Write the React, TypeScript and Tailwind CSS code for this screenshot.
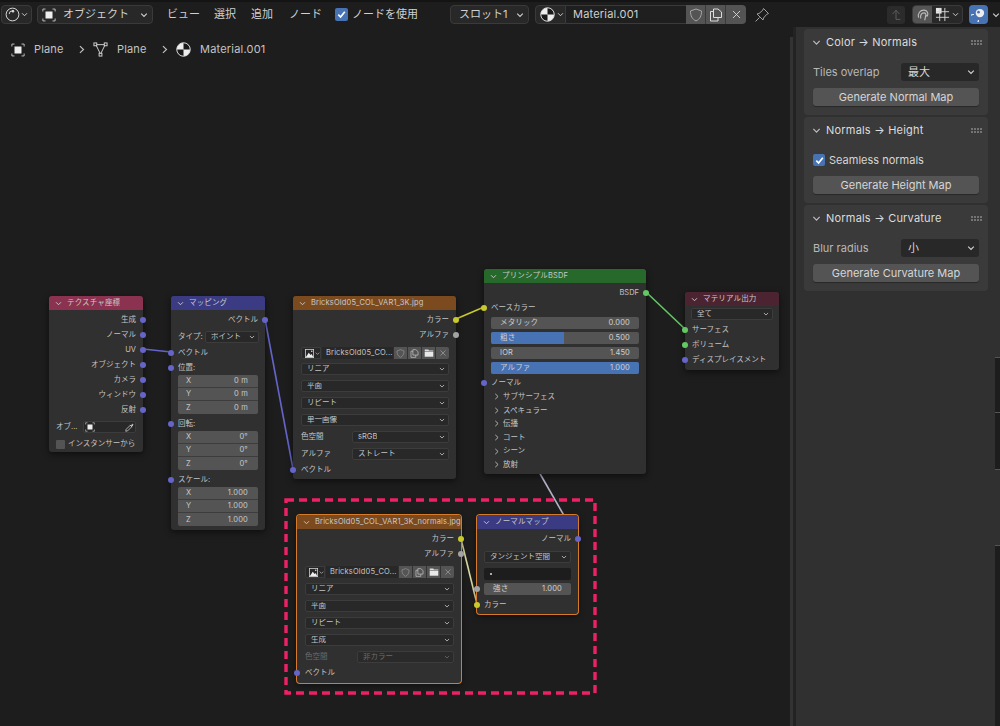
import React from "react";

const FONT = "[font-family:Inter,'Noto_Sans_CJK_JP',sans-serif]";

const Chev = ({ className = "" }: { className?: string }) => (
  <svg viewBox="0 0 8 8" className={"shrink-0 " + className} fill="none" stroke="currentColor" strokeWidth="1.1">
    <path d="M1.2 2.6 4 5.4 6.8 2.6" />
  </svg>
);
const ChevR = ({ className = "" }: { className?: string }) => (
  <svg viewBox="0 0 8 8" className={"shrink-0 " + className} fill="none" stroke="currentColor" strokeWidth="1">
    <path d="M2.6 1 5.8 4 2.6 7" />
  </svg>
);
const ObjIcon = ({ className = "" }: { className?: string }) => (
  <svg viewBox="0 0 16 16" className={"shrink-0 " + className} fill="none" stroke="#cfcfcf" strokeWidth="1">
    <rect x="4" y="4" width="8" height="8" fill="#eee" stroke="none" />
    <path d="M1 4V1.2H4M12 1.2H15V4M15 12V14.8H12M4 14.8H1V12" />
  </svg>
);
const MeshIcon = ({ className = "" }: { className?: string }) => (
  <svg viewBox="0 0 16 16" className={"shrink-0 " + className} fill="none" stroke="#d8d8d8" strokeWidth="1">
    <path d="M3 2.8H13L8 13Z" />
    <rect x="1" y="1" width="3" height="3" fill="#1d1d1d" />
    <rect x="12" y="1" width="3" height="3" fill="#1d1d1d" />
    <rect x="6.5" y="12" width="3" height="3" fill="#1d1d1d" />
  </svg>
);
const MatIcon = ({ className = "" }: { className?: string }) => (
  <svg viewBox="0 0 16 16" className={"shrink-0 " + className}>
    <circle cx="8" cy="8" r="7.2" fill="#eee" />
    <path d="M8 .8A7.2 7.2 0 0 1 15.2 8H8Z" fill="#1a1a1a" />
    <path d="M8 8H.8A7.2 7.2 0 0 0 8 15.2Z" fill="#1a1a1a" />
    <circle cx="8" cy="8" r="7.2" fill="none" stroke="#ddd" strokeWidth="1" />
  </svg>
);
const ImgIcon = ({ className = "" }: { className?: string }) => (
  <svg viewBox="0 0 12 12" className={"shrink-0 " + className}>
    <rect x=".5" y=".5" width="11" height="11" fill="none" stroke="#d8d8d8" />
    <path d="M1 11 5 5l2.5 3L9 6.5 11 11Z" fill="#eee" />
    <circle cx="9" cy="3" r="1" fill="#eee" />
  </svg>
);
const Shield = ({ className = "" }: { className?: string }) => (
  <svg viewBox="0 0 14 14" className={"shrink-0 " + className} fill="none" stroke="currentColor" strokeWidth="1">
    <path d="M7 1 12.5 3C12.5 8 11 11 7 13 3 11 1.5 8 1.5 3Z" />
  </svg>
);
const Copy = ({ className = "" }: { className?: string }) => (
  <svg viewBox="0 0 14 14" className={"shrink-0 " + className} fill="none" stroke="currentColor" strokeWidth="1">
    <path d="M4.5 3.5H1.5V13H9V9.5" />
    <path d="M4.5 1H9L12.5 4V9.5H4.5Z" />
  </svg>
);
const Folder = ({ className = "" }: { className?: string }) => (
  <svg viewBox="0 0 14 14" className={"shrink-0 " + className}>
    <path d="M1 2H6L7 3.5H13V5H1Z" fill="#ddd" />
    <rect x="1" y="5.6" width="12" height="6.6" fill="#e8e8e8" />
  </svg>
);
const Cross = ({ className = "" }: { className?: string }) => (
  <svg viewBox="0 0 14 14" className={"shrink-0 " + className} fill="none" stroke="currentColor" strokeWidth="1.1">
    <path d="M2.5 2.5 11.5 11.5M11.5 2.5 2.5 11.5" />
  </svg>
);
const Dropper = ({ className = "" }: { className?: string }) => (
  <svg viewBox="0 0 12 12" className={"shrink-0 " + className} fill="none" stroke="#d8d8d8" strokeWidth="1">
    <path d="M7 3 1.5 8.5 1 11l2.5-.5L9 5" />
    <path d="M6.5 2.5 9.5 5.5M8 3.5 10 1.5 10.8 2.2 9 4.5" fill="#d8d8d8" />
  </svg>
);
const Check = ({ className = "" }: { className?: string }) => (
  <svg viewBox="0 0 12 12" className={className} fill="none" stroke="#fff" strokeWidth="1.8">
    <path d="M2.5 6.2 5 8.8 9.6 3" />
  </svg>
);

const Sock = ({ side, color }: { side: "l" | "r"; color: string }) => (
  <span
    className={
      "absolute top-1/2 -translate-y-1/2 w-[6px] h-[6px] rounded-full " +
      (side === "l" ? "-left-[3px] " : "-right-[3px] ") +
      color
    }
  />
);
const PUR = "bg-[#6565c9]";
const YEL = "bg-[#c9c92e]";
const GRY = "bg-[#a3a3a3]";
const GRN = "bg-[#63c763]";

const Out = ({ t, c }: { t: string; c: string }) => (
  <div className="relative h-[15px] flex items-center justify-end pr-[7px]">
    {t}
    <Sock side="r" color={c} />
  </div>
);
const In = ({ t, c, className = "" }: { t: string; c: string; className?: string }) => (
  <div className={"relative h-[15px] flex items-center pl-[7px] " + className}>
    {t}
    <Sock side="l" color={c} />
  </div>
);
const Dd = ({ t, className = "", dim = false }: { t: string; className?: string; dim?: boolean }) => (
  <div
    className={
      "h-[12px] rounded-[2px] border border-[#3c3c3c] flex items-center justify-between pl-[5px] pr-[3px] " +
      (dim ? "bg-[#2a2a2a] text-[#6a6a6a] " : "bg-[#282828] ") +
      className
    }
  >
    <span className="truncate">{t}</span>
    <Chev className="w-[6px] h-[6px]" />
  </div>
);
const Head = ({ t, color, className = "" }: { t: string; color: string; className?: string }) => (
  <div className={"h-[14px] flex items-center pl-[6px] gap-[5px] rounded-t-[3px] text-[#c8c8c8] tracking-[0.15px] " + color + " " + className}>
    <Chev className="w-[7px] h-[7px]" />
    <span className="whitespace-nowrap">{t}</span>
  </div>
);
const NUM = "h-[13px] flex items-center justify-between pl-[8px] pr-[10px] text-[#c8c8c8] tracking-[0.2px] border-b border-[#3d3d3d] last:border-b-0";
const Xyz = ({ v }: { v: string[] }) => (
  <div className="mx-[7px] rounded-[2px] bg-[#545454] overflow-hidden">
    {["X", "Y", "Z"].map((a, i) => (
      <div key={a} className={NUM}>
        <span>{a}</span>
        <span>{v[i]}</span>
      </div>
    ))}
  </div>
);
const Slider = ({ t, v, fill = "" }: { t: string; v: string; fill?: string }) => (
  <div className="relative mx-[7px] h-[12px] rounded-[2px] bg-[#545454] overflow-hidden flex items-center justify-between pl-[9px] pr-[9px] text-[#d0d0d0] tracking-[0.15px]">
    {fill && <span className={"absolute left-0 top-0 h-full bg-[#4772b3] " + fill} />}
    <span className="relative">{t}</span>
    <span className="relative">{v}</span>
  </div>
);
const ImgRow = ({ name }: { name: string }) => (
  <div className="flex h-[12px] items-stretch mt-[5px]">
    <div className="w-[20px] bg-[#282828] rounded-l-[2px] flex items-center pl-[3px] gap-[1px] border border-[#3c3c3c]">
      <ImgIcon className="w-[9px] h-[9px]" />
      <Chev className="w-[5px] h-[5px]" />
    </div>
    <div className="flex-1 min-w-0 ml-[1px] bg-[#282828] flex items-center pl-[4px] overflow-hidden whitespace-nowrap tracking-[0.15px]">{name}</div>
    <div className="flex ml-[1px] bg-[#545454] rounded-r-[2px] text-[#d0d0d0]">
      <div className="w-[14px] flex items-center justify-center border-r border-[#333]"><Shield className="w-[9px] h-[9px] text-[#9a9a9a]" /></div>
      <div className="w-[14px] flex items-center justify-center border-r border-[#333]"><Copy className="w-[9px] h-[9px]" /></div>
      <div className="w-[14px] flex items-center justify-center border-r border-[#333]"><Folder className="w-[10px] h-[10px]" /></div>
      <div className="w-[13px] flex items-center justify-center"><Cross className="w-[8px] h-[8px] text-[#aaa]" /></div>
    </div>
  </div>
);
const Labeled = ({ l, t, w, dim = false, className = "" }: { l: string; t: string; w: string; dim?: boolean; className?: string }) => (
  <div className={"flex items-center " + className}>
    <span className={"shrink-0 " + w + (dim ? " text-[#6a6a6a]" : "")}>{l}</span>
    <Dd t={t} className="flex-1 min-w-0" dim={dim} />
  </div>
);

const NODE = "absolute bg-[#303030] rounded-[3px] shadow-[0_2px_6px_rgba(0,0,0,0.55)] text-[7.5px] leading-none text-[#c4c4c4] ";

const Panel = ({ title, children, cls }: { title: string; children: React.ReactNode; cls: string }) => (
  <div className={"bg-[#3a3a3a] rounded-[4px] px-[9px] " + cls}>
    <div className="h-[26px] flex items-center text-[#dcdcdc] tracking-[0.2px]">
      <Chev className="w-[9px] h-[9px] mr-[5px] -ml-[1px] text-[#bbb]" />
      <span>{title}</span>
      <span className="ml-auto mr-[-3px] grid grid-cols-4 gap-[1px]">
        {Array.from({ length: 8 }).map((_, i) => (
          <span key={i} className="w-[2px] h-[2px] bg-[#747474]" />
        ))}
      </span>
    </div>
    {children}
  </div>
);
const Btn = ({ t }: { t: string }) => (
  <div className="h-[18px] rounded-[3px] bg-[#545454] flex items-center justify-center text-[#d6d6d6] shadow-[0_1px_1px_rgba(0,0,0,0.3)]">{t}</div>
);
const PanelDd = ({ l, t }: { l: string; t: string }) => (
  <div className="flex items-center h-[18px] mt-[8px] mb-[7px] text-[#b8b8b8]">
    <span className="w-[88px]">{l}</span>
    <div className="flex-1 h-[18px] bg-[#282828] rounded-[3px] flex items-center justify-between pl-[7px] pr-[4px] text-[#d6d6d6]">
      <span>{t}</span>
      <Chev className="w-[8px] h-[8px]" />
    </div>
  </div>
);

const Wires = () => (
  <svg className="absolute inset-0 w-[790px] h-[699px]" viewBox="0 27 790 699" fill="none">
    <path d="M143 349 171 352" stroke="#6565c9" strokeWidth="1.6" />
    <path d="M265 319 293 469" stroke="#6565c9" strokeWidth="1.6" />
    <path d="M456 319 484 307" stroke="#c9c92e" strokeWidth="1.6" />
    <path d="M646 292 685 329" stroke="#63c763" strokeWidth="1.6" />
    <path d="M535 465 570 526" stroke="#b4b0c6" strokeWidth="1.6" />
    <path d="M461 539 477 604" stroke="#d9d9a0" strokeWidth="1.6" />
    <rect x="286" y="500" width="309" height="193" stroke="#ee2166" strokeWidth="3.4" strokeDasharray="8 5" />
  </svg>
);

export default function App() {
  return (
    <div className={"w-[1000px] h-[726px] bg-[#1d1d1d] overflow-hidden flex flex-col text-[11px] leading-none text-[#d0d0d0] " + FONT}>
      {/* top bar */}
      <div className="h-[27px] shrink-0 border-t-[2px] border-[#141414] flex items-center pl-[1px] whitespace-nowrap [&>*]:shrink-0">
        <div className="w-[31px] h-[19px] rounded-[4px] bg-[#282828] border border-[#3a3a3a] flex items-center pl-[3px] gap-[1px]">
          <svg viewBox="0 0 16 16" className="w-[15px] h-[15px]" fill="none" stroke="#e0e0e0" strokeWidth="1">
            <circle cx="8" cy="8" r="6.8" />
            <path d="M4.5 7.5A3.5 3.5 0 0 1 8 4" />
            <circle cx="8.5" cy="4.5" r="1" fill="#e0e0e0" />
          </svg>
          <Chev className="w-[7px] h-[7px]" />
        </div>
        <div className="ml-[5px] w-[116px] h-[19px] rounded-[4px] bg-[#282828] border border-[#3a3a3a] flex items-center pl-[4px] pr-[4px]">
          <ObjIcon className="w-[14px] h-[14px]" />
          <span className="ml-[7px]">オブジェクト</span>
          <Chev className="w-[8px] h-[8px] ml-auto" />
        </div>
        <span className="ml-[14px]">ビュー</span>
        <span className="ml-[14px]">選択</span>
        <span className="ml-[15px]">追加</span>
        <span className="ml-[16px]">ノード</span>
        <span className="ml-[13px] w-[13px] h-[13px] rounded-[2px] bg-[#4772b3] flex items-center justify-center">
          <Check className="w-[11px] h-[11px]" />
        </span>
        <span className="ml-[4px]">ノードを使用</span>
        <div className="ml-[32px] w-[79px] h-[19px] rounded-[4px] bg-[#282828] border border-[#3a3a3a] flex items-center pl-[8px] pr-[4px]">
          <span>スロット1</span>
          <Chev className="w-[8px] h-[8px] ml-auto" />
        </div>
        <div className="ml-[6px] flex h-[19px]">
          <div className="w-[31px] bg-[#282828] border border-[#3a3a3a] rounded-l-[4px] flex items-center pl-[4px] gap-[2px]">
            <MatIcon className="w-[15px] h-[15px]" />
            <Chev className="w-[7px] h-[7px]" />
          </div>
          <div className="w-[120px] bg-[#1f1f1f] border-y border-[#3a3a3a] flex items-center pl-[7px] tracking-[0.2px]">Material.001</div>
          <div className="flex bg-[#545454] rounded-r-[4px] text-[#ddd]">
            <div className="w-[20px] flex items-center justify-center border-r border-[#3a3a3a]"><Shield className="w-[14px] h-[14px] text-[#a8a8a8]" /></div>
            <div className="w-[20px] flex items-center justify-center border-r border-[#3a3a3a]"><Copy className="w-[14px] h-[14px]" /></div>
            <div className="w-[20px] flex items-center justify-center"><Cross className="w-[11px] h-[11px]" /></div>
          </div>
        </div>
        <svg viewBox="0 0 16 16" className="ml-[8px] w-[16px] h-[16px]" fill="none" stroke="#a0a0a0" strokeWidth="1">
          <path d="M9.5 1.5 14.5 6.5 12.5 7.5 9.5 11 9 13 3 7 5 6.5 8.5 3.5ZM5.5 10.5 1.5 14.5" />
        </svg>
        <div className="ml-[117px] w-[18px] h-[18px] rounded-[3px] bg-[#2b2b2b] flex items-center justify-center">
          <svg viewBox="0 0 16 16" className="w-[14px] h-[14px]" fill="none" stroke="#5e5e5e" strokeWidth="1.1">
            <path d="M4 7 8 2.5 12 7M8 2.5V13H13" />
          </svg>
        </div>
        <div className="ml-[7px] flex h-[19px] w-[51px] rounded-[4px] bg-[#282828] border border-[#3a3a3a] overflow-hidden items-center">
          <div className="w-[19px] h-full bg-[#545454] flex items-center justify-center">
            <svg viewBox="0 0 16 16" className="w-[14px] h-[14px]" fill="none" stroke="#bdbdbd" strokeWidth="1.3">
              <path d="M3 11C1.5 6 5 2.5 9 2.5 13 2.5 14.5 6.5 13 9M5.5 12C4.5 8 6.5 5.5 9 5.5 11 5.5 11.8 7.5 11 9M10 14 11 9 13.5 9" />
            </svg>
          </div>
          <svg viewBox="0 0 16 16" className="ml-[3px] w-[15px] h-[15px]" fill="none" stroke="#d4d4d4" strokeWidth="1">
            <rect x="1" y="1" width="6" height="6" fill="#e8e8e8" stroke="none" />
            <path d="M10.5 1V15M5 1V15M1 5H15M1 11H15" />
          </svg>
          <Chev className="ml-[2px] w-[7px] h-[7px]" />
        </div>
        <div className="ml-[6px] w-[19px] h-[19px] rounded-[4px] bg-[#4772b3] flex items-center justify-center">
          <svg viewBox="0 0 16 16" className="w-[15px] h-[15px]">
            <path d="M3 8A5.5 5.5 0 1 0 8 14" fill="none" stroke="#fff" strokeWidth="1.2" />
            <circle cx="9.5" cy="6.5" r="4.5" fill="#eee" />
            <circle cx="8" cy="5.5" r="1.4" fill="#4772b3" />
          </svg>
        </div>
        <Chev className="ml-[4px] w-[8px] h-[8px]" />
      </div>

      <div className="flex-1 min-h-0 flex">
        {/* node canvas */}
        <div className="relative w-[790px] shrink-0">
          <Wires />

          <div className="absolute left-[11px] top-[15px] flex items-center text-[#c4c4c4] tracking-[0.15px]">
            <ObjIcon className="w-[14px] h-[14px]" />
            <span className="ml-[9px] w-[28px]">Plane</span>
            <ChevR className="ml-[15px] w-[9px] h-[9px]" />
            <MeshIcon className="ml-[7px] w-[15px] h-[15px]" />
            <span className="ml-[9px] w-[28px]">Plane</span>
            <ChevR className="ml-[15px] w-[9px] h-[9px]" />
            <MatIcon className="ml-[7px] w-[15px] h-[15px]" />
            <span className="ml-[9px] tracking-[0.2px]">Material.001</span>
          </div>

          {/* Texture Coordinate */}
          <div className={NODE + "left-[49px] top-[269px] w-[94px] h-[156px]"}>
            <Head t="テクスチャ座標" color="bg-[#8b3250]" />
            <div className="pt-[2px]">
              <Out t="生成" c={PUR} />
              <Out t="ノーマル" c={PUR} />
              <Out t="UV" c={PUR} />
              <Out t="オブジェクト" c={PUR} />
              <Out t="カメラ" c={PUR} />
              <Out t="ウィンドウ" c={PUR} />
              <Out t="反射" c={PUR} />
              <div className="flex items-center mt-[4px] h-[12px] pl-[7px] pr-[7px]">
                <span className="w-[27px]">オブ...</span>
                <div className="flex-1 h-[12px] bg-[#282828] border border-[#3c3c3c] rounded-[2px] flex items-center justify-between px-[1px]">
                  <ObjIcon className="w-[10px] h-[10px]" />
                  <Dropper className="w-[9px] h-[9px]" />
                </div>
              </div>
              <div className="flex items-center mt-[5px] h-[12px] pl-[7px] gap-[3px]">
                <span className="w-[9px] h-[9px] rounded-[1px] bg-[#545454]" />
                <span>インスタンサーから</span>
              </div>
            </div>
          </div>

          {/* Mapping */}
          <div className={NODE + "left-[171px] top-[269px] w-[94px] h-[234px]"}>
            <Head t="マッピング" color="bg-[#3b3b83]" />
            <div className="pt-[2px]">
              <Out t="ベクトル" c={PUR} />
              <div className="flex items-center mt-[4px] h-[12px] pl-[7px] pr-[6px]">
                <span className="w-[27px]">タイプ:</span>
                <Dd t="ポイント" className="flex-1 min-w-0" />
              </div>
              <In t="ベクトル" c={PUR} className="mt-[2px]" />
              <In t="位置:" c={PUR} />
              <Xyz v={["0 m", "0 m", "0 m"]} />
              <In t="回転:" c={PUR} className="mt-[2px]" />
              <Xyz v={["0°", "0°", "0°"]} />
              <In t="スケール:" c={PUR} className="mt-[2px]" />
              <Xyz v={["1.000", "1.000", "1.000"]} />
            </div>
          </div>

          {/* Image texture */}
          <div className={NODE + "left-[293px] top-[269px] w-[163px] h-[183px]"}>
            <Head t="BricksOld05_COL_VAR1_3K.jpg" color="bg-[#7b4a1f]" />
            <div className="pt-[2px]">
              <Out t="カラー" c={YEL} />
              <Out t="アルファ" c={GRY} />
              <div className="pl-[8px] pr-[7px]">
                <ImgRow name="BricksOld05_CO..." />
                <Dd t="リニア" className="mt-[4px]" />
                <Dd t="平面" className="mt-[5px]" />
                <Dd t="リピート" className="mt-[5px]" />
                <Dd t="単一画像" className="mt-[5px]" />
                <Labeled l="色空間" t="sRGB" w="w-[51px]" className="mt-[5px]" />
                <Labeled l="アルファ" t="ストレート" w="w-[51px]" className="mt-[5px]" />
              </div>
              <In t="ベクトル" c={PUR} className="mt-[2px] pl-[8px]" />
            </div>
          </div>

          {/* Principled */}
          <div className={NODE + "left-[484px] top-[242px] w-[162px] h-[205px]"}>
            <Head t="プリンシプルBSDF" color="bg-[#27692b]" className="h-[13px]" />
            <div className="pt-[2px]">
              <Out t="BSDF" c={GRN} />
              <In t="ベースカラー" c={YEL} />
              <div className="flex flex-col gap-[3px] mt-[2px]">
                <Slider t="メタリック" v="0.000" />
                <Slider t="粗さ" v="0.500" fill="w-[49.5%]" />
                <Slider t="IOR" v="1.450" />
                <Slider t="アルファ" v="1.000" fill="w-full" />
              </div>
              <In t="ノーマル" c={PUR} className="mt-[1px]" />
              {["サブサーフェス", "スペキュラー", "伝播", "コート", "シーン", "放射"].map((t) => (
                <div key={t} className="h-[13.6px] flex items-center pl-[9px] gap-[3px]">
                  <ChevR className="w-[7px] h-[7px]" />
                  <span>{t}</span>
                </div>
              ))}
            </div>
          </div>

          {/* Material output */}
          <div className={NODE + "left-[685px] top-[265px] w-[94px] h-[78px]"}>
            <Head t="マテリアル出力" color="bg-[#4c2431]" />
            <Dd t="全て" className="mx-[6px] mt-[2px]" />
            <div className="mt-[2px]">
              <In t="サーフェス" c={GRN} />
              <In t="ボリューム" c={GRN} />
              <In t="ディスプレイスメント" c={PUR} />
            </div>
          </div>

          {/* Normals image */}
          <div className={NODE + "left-[297px] top-[488px] w-[164px] h-[168px] ring-1 ring-[#d67a2c]"}>
            <Head t="BricksOld05_COL_VAR1_3K_normals.jpg" color="bg-[#7b4a1f]" />
            <div className="pt-[2px]">
              <Out t="カラー" c={YEL} />
              <Out t="アルファ" c={GRY} />
              <div className="pl-[8px] pr-[7px]">
                <ImgRow name="BricksOld05_CO..." />
                <Dd t="リニア" className="mt-[5px]" />
                <Dd t="平面" className="mt-[5px]" />
                <Dd t="リピート" className="mt-[5px]" />
                <Dd t="生成" className="mt-[5px]" />
                <Labeled l="色空間" t="非カラー" w="w-[52px]" dim className="mt-[5px]" />
              </div>
              <In t="ベクトル" c={PUR} className="mt-[2px] pl-[8px]" />
            </div>
          </div>

          {/* Normal map */}
          <div className={NODE + "left-[477px] top-[488px] w-[101px] h-[99px] ring-1 ring-[#d67a2c]"}>
            <Head t="ノーマルマップ" color="bg-[#3b3b83]" />
            <div className="pt-[2px]">
              <Out t="ノーマル" c={PUR} />
              <div className="px-[7px]">
                <Dd t="タンジェント空間" className="mt-[5px]" />
                <div className="mt-[5px] h-[12px] bg-[#1d1d1d] rounded-[2px] flex items-center pl-[6px]">
                  <span className="w-[2px] h-[2px] rounded-full bg-[#ddd]" />
                </div>
              </div>
              <div className="relative mt-[3px] h-[12px]">
                <Sock side="l" color={GRY} />
                <div className="mx-[7px] h-[12px] rounded-[2px] bg-[#545454] flex items-center justify-between pl-[9px] pr-[9px] text-[#d0d0d0] tracking-[0.15px]">
                  <span>強さ</span>
                  <span>1.000</span>
                </div>
              </div>
              <In t="カラー" c={YEL} className="mt-[2px]" />
            </div>
          </div>
        </div>

        {/* sidebar edges */}
        <div className="w-[3px] mt-[10px] bg-[#333333] shrink-0" />
        <div className="w-[3px] bg-[#232323] shrink-0" />
        <div className="w-[199px] shrink-0 bg-[#303030] pl-[8px] pr-[7px] pt-[2px] flex flex-col gap-[2px]">
          <Panel title="Color → Normals" cls="h-[86px]">
            <PanelDd l="Tiles overlap" t="最大" />
            <Btn t="Generate Normal Map" />
          </Panel>
          <Panel title="Normals → Height" cls="h-[86px]">
            <div className="flex items-center h-[18px] mt-[8px] mb-[7px] text-[#d6d6d6]">
              <span className="w-[12px] h-[12px] rounded-[2px] bg-[#4772b3] flex items-center justify-center mr-[4px]">
                <Check className="w-[11px] h-[11px]" />
              </span>
              Seamless normals
            </div>
            <Btn t="Generate Height Map" />
          </Panel>
          <Panel title="Normals → Curvature" cls="h-[86px]">
            <PanelDd l="Blur radius" t="小" />
            <Btn t="Generate Curvature Map" />
          </Panel>
        </div>
        {/* next editor, cut off at the window edge */}
        <div className="w-[5px] shrink-0 flex flex-col">
          <div className="h-[331px] bg-[#303030] border-b border-[#555]" />
          <div className="h-[55px] border-b border-[#555]" />
          <div className="h-[57px] border-b border-[#555]" />
          <div className="h-[76px] bg-[#303030] border-b border-[#555]" />
          <div className="flex-1" />
        </div>
      </div>
    </div>
  );
}
